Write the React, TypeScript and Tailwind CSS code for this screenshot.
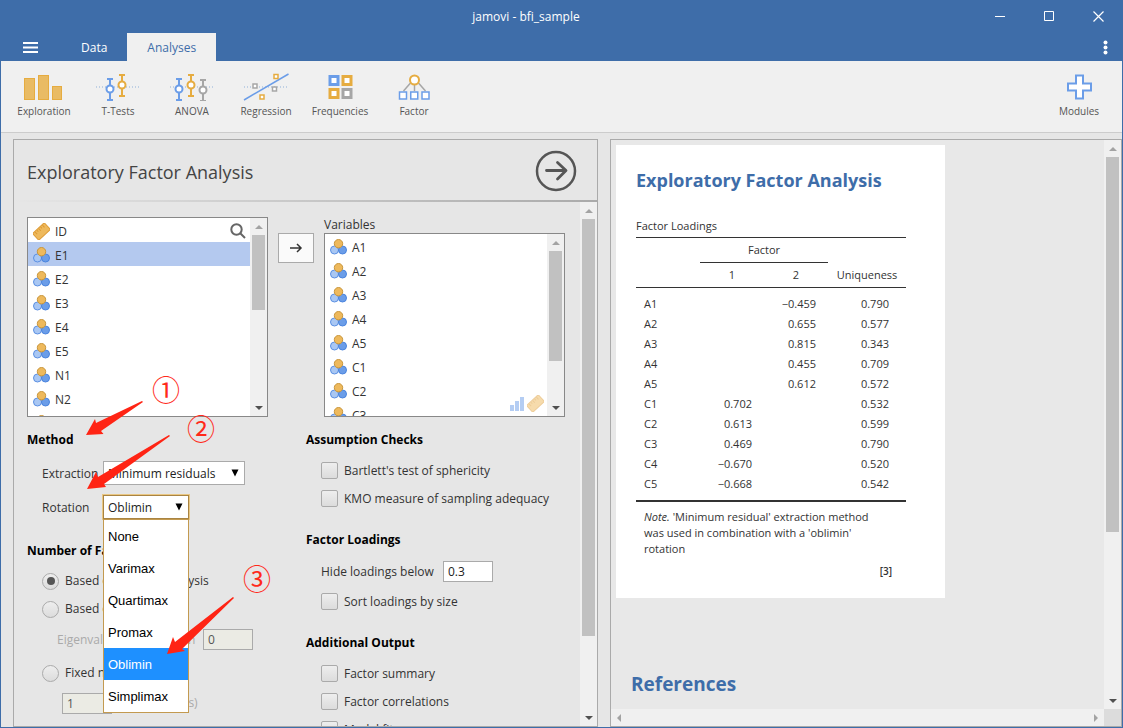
import { useState } from 'react'
import type { ReactNode } from 'react'

const sourceVars = ['E1', 'E2', 'E3', 'E4', 'E5', 'N1', 'N2', 'N3']
const targetVars = ['A1', 'A2', 'A3', 'A4', 'A5', 'C1', 'C2', 'C3']
const rotations = ['None', 'Varimax', 'Quartimax', 'Promax', 'Oblimin', 'Simplimax']

const loadings = [
  { name: 'A1', f1: '', f2: '−0.459', uniq: '0.790' },
  { name: 'A2', f1: '', f2: '0.655', uniq: '0.577' },
  { name: 'A3', f1: '', f2: '0.815', uniq: '0.343' },
  { name: 'A4', f1: '', f2: '0.455', uniq: '0.709' },
  { name: 'A5', f1: '', f2: '0.612', uniq: '0.572' },
  { name: 'C1', f1: '0.702', f2: '', uniq: '0.532' },
  { name: 'C2', f1: '0.613', f2: '', uniq: '0.599' },
  { name: 'C3', f1: '0.469', f2: '', uniq: '0.790' },
  { name: 'C4', f1: '−0.670', f2: '', uniq: '0.520' },
  { name: 'C5', f1: '−0.668', f2: '', uniq: '0.542' },
]

const BLUE = '#6b9de8'
const GOLD = '#e6ac40'
const GREY = '#a6a6a6'

function ExplorationIcon() {
  return (
    <svg width="40" height="27" viewBox="0 0 40 27" fill="#e9bb64" stroke={GOLD}>
      <rect x="0.5" y="4.5" width="10" height="21" />
      <rect x="14.5" y="1.5" width="10" height="24" />
      <rect x="28.5" y="12.5" width="9" height="13" />
    </svg>
  )
}

interface ErrorBarProps {
  x: number
  y: number
  color: string
}

function ErrorBar({ x, y, color }: ErrorBarProps) {
  return (
    <g stroke={color} strokeWidth="2" fill="#fff">
      <path d={`M${x - 3} ${y - 10}h6M${x} ${y - 10}v21M${x - 3} ${y + 11}h6`} />
      <circle cx={x} cy={y} r="3.5" />
    </g>
  )
}

function TTestIcon() {
  return (
    <svg width="46" height="28" viewBox="0 0 46 28">
      <path d="M1 14h45" stroke="#8fb0d8" strokeDasharray="1 2" />
      <ErrorBar x={15} y={16} color={BLUE} />
      <ErrorBar x={27} y={12} color={GOLD} />
    </svg>
  )
}

function AnovaIcon() {
  return (
    <svg width="46" height="28" viewBox="0 0 46 28">
      <path d="M1 14h45" stroke="#8fb0d8" strokeDasharray="1 2" />
      <ErrorBar x={10} y={16} color={BLUE} />
      <ErrorBar x={22} y={12} color={GOLD} />
      <ErrorBar x={34} y={17} color={GREY} />
    </svg>
  )
}

function RegressionIcon() {
  return (
    <svg width="46" height="28" viewBox="0 0 46 28" fill="#fff" strokeWidth="1.5">
      <path d="M1 14h45" stroke="#8fb0d8" strokeWidth="1" strokeDasharray="1 2" />
      <path d="M1 27L45.500 1" stroke={BLUE} />
      <rect x="10" y="11" width="4" height="4" stroke={GREY} />
      <rect x="29.500" y="14" width="4" height="4" stroke={GREY} />
      <rect x="31" y="1.500" width="4" height="4" stroke={GOLD} />
      <rect x="17" y="22" width="4" height="4" stroke={GOLD} />
    </svg>
  )
}

function FrequenciesIcon() {
  return (
    <svg width="26" height="26" viewBox="0 0 26 26" fill="#fff" strokeWidth="3">
      <rect x="3" y="2.500" width="8" height="8" stroke={BLUE} />
      <rect x="16" y="2.500" width="8" height="8" stroke={GOLD} />
      <rect x="3" y="15.500" width="8" height="8" stroke={GOLD} />
      <rect x="16" y="15.500" width="8" height="8" stroke={GREY} />
    </svg>
  )
}

function FactorIcon() {
  return (
    <svg width="32" height="27" viewBox="0 0 32 27" fill="#fff" strokeWidth="1.5">
      <path d="M12.500 9L5.500 17M16.500 10v7M20.500 9l7 8" stroke={GREY} />
      <circle cx="16.500" cy="6" r="4.500" stroke={GOLD} strokeWidth="2" />
      <rect x="1.500" y="18" width="7" height="7" stroke={BLUE} />
      <rect x="12.750" y="18" width="7" height="7" stroke={BLUE} />
      <rect x="24" y="18" width="7" height="7" stroke={BLUE} />
    </svg>
  )
}

function ModulesIcon() {
  return (
    <svg width="26" height="26" viewBox="0 0 26 26">
      <path d="M10 1.500h7v8h8v7h-8v8h-7v-8h-8v-7h8z" fill="#fff" stroke={BLUE} strokeWidth="2" />
    </svg>
  )
}

function NominalIcon() {
  return (
    <svg className="shrink-0" width="17" height="17" viewBox="0 0 17 17">
      <circle cx="4.500" cy="11" r="4" fill="#a9c7f3" stroke="#5b90e3" />
      <circle cx="12.500" cy="11" r="4" fill="#6b9de8" stroke="#4a84de" />
      <circle cx="8.500" cy="4.700" r="4.200" fill="#eeb95c" stroke="#c8953a" />
    </svg>
  )
}

function ContinuousIcon() {
  return (
    <svg className="shrink-0" width="17" height="17" viewBox="0 0 17 17">
      <g transform="rotate(-43 8.500 8.500)" stroke="#dd9a33">
        <rect x="0.500" y="4" width="16" height="9" rx="1" fill="#eeb95c" />
        <path d="M3.500 4.500v3M6 4.500v2M8.500 4.500v3M11 4.500v2M13.500 4.500v3" />
      </g>
    </svg>
  )
}

function OrdinalIcon() {
  return (
    <svg width="15" height="15" viewBox="0 0 15 15" fill={BLUE}>
      <path d="M0 9h4v6H0zM5 5h4v10H5zM10 1h4v14h-4z" />
    </svg>
  )
}

function Caret({ className, d }: { className: string; d: string }) {
  return (
    <svg className={className} width="8" height="8" viewBox="0 0 8 8" fill="currentColor">
      <path d={d} />
    </svg>
  )
}

// thumb is the visible share of the track, in percent
function ScrollBar({ thumb }: { thumb: number }) {
  return (
    <div className="flex w-[17px] shrink-0 flex-col bg-[#f0f0f0]">
      <div className="flex h-[17px] items-center justify-center">
        <Caret className="text-[#a3a3a3]" d="M0 6l4-4 4 4z" />
      </div>
      <div className="flex-1 px-0.5">
        <div className="bg-[#c1c1c1]" style={{ height: `${thumb}%` }} />
      </div>
      <div className="flex h-[17px] items-center justify-center">
        <Caret className="text-[#505050]" d="M0 2l4 4 4-4z" />
      </div>
    </div>
  )
}

interface RibbonItemProps {
  label: string
  children: ReactNode
}

function RibbonItem({ label, children }: RibbonItemProps) {
  return (
    <button className="flex w-[74px] flex-col items-center text-[10px] leading-4 text-[#555]">
      <span className="flex h-8 items-center">{children}</span>
      <span>{label}</span>
    </button>
  )
}

function VariableRow({ name, selected }: { name: string; selected?: boolean }) {
  return (
    <li className={`flex h-6 items-center gap-[5px] pt-0.5 pl-[5px] ${selected ? 'bg-[#b4c9ef]' : ''}`}>
      <NominalIcon />
      <span className="pt-px">{name}</span>
    </li>
  )
}

interface SectionProps {
  title: string
  className?: string
  children: ReactNode
}

function Section({ title, className, children }: SectionProps) {
  return (
    <section className={className}>
      <h3 className="mb-1.5 pt-px text-[12px] leading-5 font-bold text-black">{title}</h3>
      {children}
    </section>
  )
}

function Check({ label }: { label: string }) {
  return (
    <label className="ml-[15px] flex h-7 items-center gap-1.5">
      <input
        type="checkbox"
        className="size-[17px] shrink-0 appearance-none rounded-xs border border-[#aaa] bg-linear-to-b from-[#eee] to-[#dcdcdc]"
      />
      <span className="pt-px">{label}</span>
    </label>
  )
}

interface RadioProps {
  label: string
  checked: boolean
  onSelect: () => void
}

function Radio({ label, checked, onSelect }: RadioProps) {
  return (
    <label className="ml-[15px] flex h-7 items-center gap-1.5">
      <input
        type="radio"
        name="nFactors"
        checked={checked}
        onChange={onSelect}
        className="grid size-[17px] shrink-0 appearance-none place-items-center rounded-full border border-[#aaa] bg-linear-to-b from-[#eee] to-[#dcdcdc] before:size-2 before:rounded-full checked:before:bg-[#555]"
      />
      {label}
    </label>
  )
}

function DropArrow() {
  return (
    <svg className="pointer-events-none absolute top-2 right-1.5" width="8" height="8" viewBox="0 0 8 8">
      <path d="M0.500 0.500h7L4 7.500z" fill="#000" />
    </svg>
  )
}

function Options() {
  const [method, setMethod] = useState('parallel')
  const [rotation, setRotation] = useState('Oblimin')

  return (
    <div className="grid grid-cols-[279px_1fr]">
      <div>
        <Section title="Method">
          <div className="ml-[15px] flex h-[34px] items-center">
            <label htmlFor="extraction" className="w-[61px] pt-px">Extraction</label>
            <div className="relative">
              <select id="extraction" className="h-6 w-[142px] appearance-none border border-[#aaa] bg-white px-1 pt-px text-[12px] leading-5 text-[#222]">
                <option>Minimum residuals</option>
              </select>
              <DropArrow />
            </div>
          </div>
          <div className="ml-[15px] flex h-[34px] items-center">
            <label htmlFor="rotation" className="w-[61px] pt-px">Rotation</label>
            <div className="relative">
              <select
                id="rotation"
                value={rotation}
                onChange={(e) => setRotation(e.target.value)}
                className="h-6 w-[86px] appearance-none border border-[#a98442] bg-white px-1 pt-px text-[12px] leading-5 text-[#222] ring-1 ring-[#e9c784]"
              >
                {rotations.map((r) => (
                  <option key={r}>{r}</option>
                ))}
              </select>
              <DropArrow />
              <ul className="absolute top-6 left-0 z-10 w-[86px] border border-[#c39a50] bg-white font-['Liberation_Sans',sans-serif] text-[13px] leading-8 text-black">
                {rotations.map((r) => (
                  <li
                    key={r}
                    onClick={() => setRotation(r)}
                    className={`h-8 px-1 pt-px ${r === rotation ? 'bg-[#1e90ff] text-white' : ''}`}
                  >
                    {r}
                  </li>
                ))}
              </ul>
            </div>
          </div>
        </Section>
        <Section title="Number of Factors" className="mt-4">
          <Radio label="Based on parallel analysis" checked={method === 'parallel'} onSelect={() => setMethod('parallel')} />
          <Radio label="Based on eigenvalue" checked={method === 'eigen'} onSelect={() => setMethod('eigen')} />
          <div className="ml-[30px] flex h-8 items-center text-[#aaa]">
            <label htmlFor="minEigen" className="w-[146px] pt-px whitespace-nowrap">Eigenvalues greater than</label>
            <input id="minEigen" disabled defaultValue="0" className="h-[21px] w-[50px] border border-[#aaa] bg-[#ebebe4] px-1 text-[#555]" />
          </div>
          <div className="pt-1">
            <Radio label="Fixed number" checked={method === 'fixed'} onSelect={() => setMethod('fixed')} />
          </div>
          <div className="ml-[35px] flex h-8 items-center gap-10 text-[#aaa]">
            <input id="nFixed" disabled defaultValue="1" className="h-[21px] w-[50px] border border-[#aaa] bg-[#ebebe4] px-1 text-[#555]" />
            <label htmlFor="nFixed">factor(s)</label>
          </div>
        </Section>
      </div>
      <div>
        <Section title="Assumption Checks">
          <Check label="Bartlett's test of sphericity" />
          <Check label="KMO measure of sampling adequacy" />
        </Section>
        <Section title="Factor Loadings" className="mt-[17px]">
          <div className="ml-[15px] flex h-[31px] items-center">
            <label htmlFor="hide" className="w-[122px] pt-px">Hide loadings below</label>
            <input id="hide" defaultValue="0.3" className="h-[21px] w-[50px] border border-[#aaa] bg-white px-1 text-[#222]" />
          </div>
          <Check label="Sort loadings by size" />
        </Section>
        <Section title="Additional Output" className="mt-[17px]">
          <Check label="Factor summary" />
          <Check label="Factor correlations" />
          <Check label="Model fit measures" />
        </Section>
      </div>
    </div>
  )
}

function Annotations() {
  return (
    <div className="pointer-events-none absolute inset-0 z-20 font-['Noto_Sans_CJK_SC',sans-serif] text-[28px] leading-7 text-[#ff2a1a]">
      <svg className="absolute inset-0 size-full" fill="#ff2414">
        <path d="M72 233L81 217L82 221L128 199L129 200L87 229L89.500 232Z" />
        <path d="M73 287L82 270L84 275L155 233L156 234L90 282L92 285Z" />
        <path d="M153 452L159 435L161 440L219 395L220 396L168 447L171 449Z" />
      </svg>
      <span className="absolute top-[173px] left-[138px]">①</span>
      <span className="absolute top-[212px] left-[173px]">②</span>
      <span className="absolute top-[362px] left-[229px]">③</span>
    </div>
  )
}

function AnalysisPanel() {
  return (
    <div className="flex w-[585px] shrink-0 flex-col border border-[#aaa] bg-[#e6e6e6]">
      <div className="flex h-[60px] shrink-0 items-center justify-between pt-0.5 pr-5 pl-[13px]">
        <h2 className="pt-0.5 text-[18px] leading-6 text-[#444]">Exploratory Factor Analysis</h2>
        <button aria-label="Hide options">
          <svg width="42" height="42" viewBox="0 0 42 42" fill="none" stroke="#555">
            <circle cx="21" cy="21" r="19" strokeWidth="2.500" />
            <path d="M11.500 20.500h19M22.500 12.500l8.500 8-8.500 8.500" strokeWidth="2.800" strokeLinecap="round" strokeLinejoin="round" />
          </svg>
        </button>
      </div>
      <div className="h-0.5 shrink-0 bg-linear-to-r from-[#e6e6e6] to-[#aaa]" />
      <div className="flex min-h-0 flex-1">
        <div className="relative min-w-0 flex-1 overflow-hidden pt-[15px] pl-[13px] text-[12px] leading-5 text-[#333]">
          <div className="mb-3 flex h-[200px] gap-2.5">
            <div className="flex w-[241px] border border-[#888] bg-white">
              <ul className="flex-1 overflow-hidden">
                <li className="flex h-6 items-center gap-[5px] pt-0.5 pr-1 pl-[5px]">
                  <ContinuousIcon />
                  <span className="flex-1 pt-px">ID</span>
                  <button aria-label="Search">
                    <svg width="16" height="16" viewBox="0 0 16 16" fill="none" stroke="#666" strokeWidth="2">
                      <circle cx="6.500" cy="6.500" r="5.200" />
                      <path d="M10.500 10.500l4.500 4.500" />
                    </svg>
                  </button>
                </li>
                {sourceVars.map((v) => (
                  <VariableRow key={v} name={v} selected={v === 'E1'} />
                ))}
              </ul>
              <ScrollBar thumb={46} />
            </div>
            <button aria-label="Move to Variables" className="mt-4 flex h-[30px] w-9 items-center justify-center border border-[#aaa] bg-[#fafafa]">
              <svg width="14" height="12" viewBox="0 0 14 12" fill="none" stroke="#333" strokeWidth="1.500">
                <path d="M1 6h11M8 2l4 4-4 4" />
              </svg>
            </button>
            <div className="flex w-[241px] flex-col">
              <h3 className="h-4 leading-4">Variables</h3>
              <div className="relative flex min-h-0 flex-1 border border-[#888] bg-white">
                <ul className="flex-1 overflow-hidden">
                  {targetVars.map((v) => (
                    <VariableRow key={v} name={v} />
                  ))}
                </ul>
                <div className="absolute right-5 bottom-1 flex items-center gap-0.5 opacity-50">
                  <OrdinalIcon />
                  <ContinuousIcon />
                </div>
                <ScrollBar thumb={74} />
              </div>
            </div>
          </div>
          <Options />
          <Annotations />
        </div>
        <ScrollBar thumb={85} />
      </div>
    </div>
  )
}

function LoadingsTable() {
  return (
    <table className="w-[270px] table-fixed border-collapse text-[11px] leading-5 text-[#333]">
      <caption className="h-[22px] text-left leading-[22px]">Factor Loadings</caption>
      <colgroup>
        <col className="w-16" />
        <col className="w-16" />
        <col className="w-16" />
        <col />
      </colgroup>
      <thead className="border-y border-[#333]">
        <tr className="h-[25px]">
          <td />
          <th colSpan={2} className="border-b border-[#333] p-0 font-normal">Factor</th>
          <td />
        </tr>
        <tr className="h-[25px]">
          <td />
          <th className="p-0 font-normal">1</th>
          <th className="p-0 font-normal">2</th>
          <th className="p-0 font-normal">Uniqueness</th>
        </tr>
      </thead>
      <tbody className="border-b-2 border-[#333] before:block before:h-1.5 after:block after:h-1.5">
        {loadings.map((row) => (
          <tr key={row.name} className="h-5">
            <td className="p-0 pl-2">{row.name}</td>
            <td className="p-0 pr-3 text-right">{row.f1}</td>
            <td className="p-0 pr-3 text-right">{row.f2}</td>
            <td className="p-0 pr-[17px] text-right">{row.uniq}</td>
          </tr>
        ))}
      </tbody>
    </table>
  )
}

function ResultsPanel() {
  return (
    <div className="flex min-w-0 flex-1 flex-col border border-[#aaa] bg-[#e8e8e8]">
      <div className="flex min-h-0 flex-1">
        <div className="min-w-0 flex-1 overflow-hidden p-[5px]">
          <article className="h-[453px] w-[329px] bg-white px-5 pt-[23px]">
            <h1 className="mb-[23px] text-[18px] leading-6 font-bold whitespace-nowrap text-[#3e6da9]">Exploratory Factor Analysis</h1>
            <LoadingsTable />
            <p className="mt-[7px] w-[250px] pl-2 text-[11px] leading-4 text-[#333]">
              <em>Note.</em> 'Minimum residual' extraction method was used in combination with a 'oblimin' rotation
            </p>
            <p className="mt-1.5 w-64 text-right text-[10px] leading-4 font-semibold text-[#333]">[3]</p>
          </article>
          <h1 className="mt-[74px] pl-[15px] text-[19px] leading-6 font-bold text-[#3e6da9]">References</h1>
        </div>
        <ScrollBar thumb={70} />
      </div>
      <div className="flex h-[17px] shrink-0 bg-[#f0f0f0]">
        <div className="flex flex-1 items-center justify-between px-1">
          <Caret className="text-[#a3a3a3]" d="M6 0L2 4l4 4z" />
          <Caret className="text-[#a3a3a3]" d="M2 0l4 4-4 4z" />
        </div>
        <div className="w-[17px] bg-[#dcdcdc]" />
      </div>
    </div>
  )
}

function TitleBar() {
  return (
    <header className="shrink-0 bg-[#3e6da9] text-[12px] text-white">
      <div className="flex h-[33px] items-center">
        <div className="flex-1 pt-px pl-[76px] text-center">jamovi - bfi_sample</div>
        <div className="flex">
          <button aria-label="Minimize" className="flex h-8 w-[49px] items-center justify-center">
            <svg width="11" height="11" viewBox="0 0 11 11" stroke="#fff"><path d="M1 5.500h10" /></svg>
          </button>
          <button aria-label="Maximize" className="flex h-8 w-[49px] items-center justify-center">
            <svg width="11" height="11" viewBox="0 0 11 11" fill="none" stroke="#fff"><path d="M1.500 0.500h9v9h-9z" /></svg>
          </button>
          <button aria-label="Close" className="flex h-8 w-[49px] items-center justify-center">
            <svg width="12" height="11" viewBox="0 0 12 11" stroke="#fff" strokeWidth="1.200"><path d="M1.500 0.500l10 10M11.500 0.500l-10 10" /></svg>
          </button>
        </div>
      </div>
      <nav className="flex h-7">
        <button aria-label="Menu" className="flex w-[60px] items-center pl-[22px]">
          <svg width="15" height="11" viewBox="0 0 15 11" fill="#fff"><path d="M0 0h15v2H0zM0 4.500h15v2H0zM0 9h15v2H0z" /></svg>
        </button>
        <button className="px-5 pt-0.5">Data</button>
        <button className="bg-[#f0f0f0] px-5 pt-0.5 text-[#3e6da9]">Analyses</button>
        <button aria-label="More" className="ml-auto flex w-[34px] items-center justify-center">
          <svg width="5" height="15" viewBox="0 0 5 15" fill="#fff">
            <circle cx="2.500" cy="2.500" r="2" />
            <circle cx="2.500" cy="7.500" r="2" />
            <circle cx="2.500" cy="12.500" r="2" />
          </svg>
        </button>
      </nav>
    </header>
  )
}

export default function App() {
  return (
    <div className="flex h-screen flex-col overflow-hidden border-x border-b border-[#3e6da9] bg-[#e6e6e6] font-['Open_Sans',sans-serif]">
      <TitleBar />
      <div className="flex h-[72px] shrink-0 items-start border-b border-[#ccc] bg-[#f0f0f0] px-1.5 pt-2.5">
        <RibbonItem label="Exploration"><ExplorationIcon /></RibbonItem>
        <RibbonItem label="T-Tests"><TTestIcon /></RibbonItem>
        <RibbonItem label="ANOVA"><AnovaIcon /></RibbonItem>
        <RibbonItem label="Regression"><RegressionIcon /></RibbonItem>
        <RibbonItem label="Frequencies"><FrequenciesIcon /></RibbonItem>
        <RibbonItem label="Factor"><FactorIcon /></RibbonItem>
        <div className="ml-auto">
          <RibbonItem label="Modules"><ModulesIcon /></RibbonItem>
        </div>
      </div>
      <main className="flex min-h-0 flex-1 gap-3 pt-1.5 pl-3">
        <AnalysisPanel />
        <ResultsPanel />
      </main>
    </div>
  )
}
